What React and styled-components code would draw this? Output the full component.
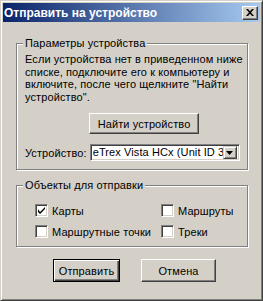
import React from "react";
import styled, { createGlobalStyle } from "styled-components";

const Global = createGlobalStyle`
  html, body { margin: 0; padding: 0; background: #d4d0c8; }
  body { font-family: "Liberation Sans", Arial, sans-serif; font-size: 11px; color: #000; letter-spacing: 0.1px; }
  * { box-sizing: border-box; }
`;

const Window = styled.div`
  width: 263px;
  height: 301px;
  background: #d4d0c8;
  border: 1px solid;
  border-color: #d4d0c8 #404040 #404040 #d4d0c8;
  box-shadow: inset 1px 1px #fff, inset -1px -1px #808080;
  padding: 2px;
  display: flex;
  flex-direction: column;
`;

const TitleBar = styled.div`
  height: 19px;
  background: linear-gradient(to right, #0a246a, #a6caf0);
  display: flex;
  align-items: center;
  justify-content: space-between;
  padding: 0 2px 0 1px;
`;

const Title = styled.span`
  color: #fff;
  font-weight: bold;
  font-size: 12px;
  letter-spacing: 0;
`;

const CloseBtn = styled.div`
  width: 16px;
  height: 14px;
  background: #d4d0c8;
  border: 1px solid;
  border-color: #fff #404040 #404040 #fff;
  box-shadow: inset -1px -1px #808080;
  display: flex;
  align-items: center;
  justify-content: center;
`;

const Body = styled.div`
  flex: 1;
  display: flex;
  flex-direction: column;
  padding: 15px 12px 0 13px;
`;

const Group = styled.fieldset`
  margin: 0;
  padding: ${(p) => p.$pad};
  border: 1px solid #808080;
  box-shadow: inset 1px 1px #fff, 1px 1px #fff;
  margin-bottom: ${(p) => p.$mb || 0}px;
  min-width: 0;
`;

const Legend = styled.legend`
  padding: 0 2px;
  margin-left: ${(p) => p.$ml}px;
  line-height: 13px;
  background: #d4d0c8;
`;

const Para = styled.p`
  margin: 0;
  line-height: 12.5px;
  white-space: nowrap;
`;

const Center = styled.div`
  display: flex;
  padding-left: 64px;
  margin-top: 10px;
`;

const Button = styled.div`
  width: ${(p) => p.$w}px;
  height: ${(p) => p.$h}px;
  display: flex;
  align-items: center;
  justify-content: center;
  background: #d4d0c8;
  border: 1px solid;
  border-color: ${(p) => (p.$default ? "#000" : "#fff #404040 #404040 #fff")};
  box-shadow: ${(p) =>
    p.$default
      ? "inset 1px 1px #fff, inset -1px -1px #404040, inset -2px -2px #808080"
      : "inset -1px -1px #808080"};
`;

const Row = styled.div`
  display: flex;
  align-items: center;
  margin-top: ${(p) => p.$mt}px;
  gap: 3px;
`;

const Select = styled.div`
  width: 150px;
  height: 17px;
  background: #fff;
  border: 1px solid;
  border-color: #808080 #fff #fff #808080;
  box-shadow: inset 1px 1px #404040, inset -1px -1px #d4d0c8;
  display: flex;
  align-items: center;
  padding: 2px;
`;

const SelectText = styled.span`
  flex: 1;
  min-width: 0;
  white-space: nowrap;
  overflow: hidden;
  line-height: 13px;
`;

const Drop = styled.div`
  width: 14px;
  height: 13px;
  flex: none;
  background: #d4d0c8;
  border: 1px solid;
  border-color: #d4d0c8 #404040 #404040 #d4d0c8;
  box-shadow: inset 1px 1px #fff, inset -1px -1px #808080;
  display: flex;
  align-items: center;
  justify-content: center;
`;

const Checks = styled.div`
  display: grid;
  grid-template-columns: 126px auto;
  row-gap: 8px;
`;

const Check = styled.label`
  display: flex;
  align-items: center;
  gap: 4px;
  height: 13px;
`;

const Box = styled.span`
  width: 13px;
  height: 13px;
  flex: none;
  background: #fff;
  border: 1px solid;
  border-color: #808080 #fff #fff #808080;
  box-shadow: inset 1px 1px #404040, inset -1px -1px #d4d0c8;
  display: flex;
  align-items: center;
  justify-content: center;
`;

const Footer = styled.div`
  display: flex;
  gap: 21px;
  margin-top: 12px;
  padding-left: 37px;
`;

const CheckItem = ({ checked, children }) => (
  <Check>
    <Box>
      {checked && (
        <svg width="7" height="7" viewBox="0 0 7 7">
          <path d="M0 2v3l2 2 5-5V0L2 5z" fill="#000" />
        </svg>
      )}
    </Box>
    {children}
  </Check>
);

export default function App() {
  return (
    <>
      <Global />
      <Window>
        <TitleBar>
          <Title>Отправить на устройство</Title>
          <CloseBtn>
            <svg width="8" height="7" viewBox="0 0 8 7">
              <path d="M0 0h2l2 2.2L6 0h2L5 3.5 8 7H6L4 4.8 2 7H0l3-3.5z" fill="#000" />
            </svg>
          </CloseBtn>
        </TitleBar>
        <Body>
          <Group $pad="3px 8px 8px 8px" $mb={9}>
            <Legend $ml={-2}>Параметры устройства</Legend>
            <Para>
              Если устройства нет в приведенном ниже
              <br />
              списке, подключите его к компьютеру и
              <br />
              включите, после чего щелкните "Найти
              <br />
              устройство".
            </Para>
            <Center>
              <Button $w={110} $h={21}>Найти устройство</Button>
            </Center>
            <Row $mt={10}>
              <span>Устройство:</span>
              <Select>
                <SelectText>eTrex Vista HCx (Unit ID 3</SelectText>
                <Drop>
                  <svg width="7" height="4" viewBox="0 0 7 4">
                    <path d="M0 0h7L3.5 4z" fill="#000" />
                  </svg>
                </Drop>
              </Select>
            </Row>
          </Group>
          <Group $pad="12px 8px 8px 18px">
            <Legend $ml={-12}>Объекты для отправки</Legend>
            <Checks>
              <CheckItem checked>Карты</CheckItem>
              <CheckItem>Маршруты</CheckItem>
              <CheckItem>Маршрутные точки</CheckItem>
              <CheckItem>Треки</CheckItem>
            </Checks>
          </Group>
          <Footer>
            <Button $w={67} $h={23} $default>Отправить</Button>
            <Button $w={75} $h={23}>Отмена</Button>
          </Footer>
        </Body>
      </Window>
    </>
  );
}
